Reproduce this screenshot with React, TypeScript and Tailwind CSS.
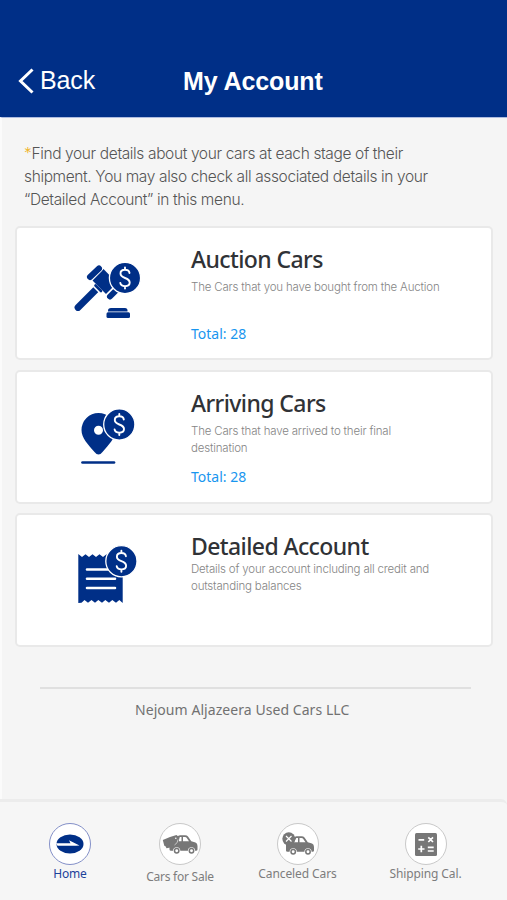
import React from "react";

type CardProps = {
  title: string;
  lines: string[];
  total?: number;
  icon: React.ReactNode;
  compact?: boolean;
};

type TabProps = {
  label: string;
  icon: React.ReactNode;
  className: string;
  active?: boolean;
};

function DollarBadge({ x, y }: { x: number; y: number }) {
  return (
    <g transform={`translate(${x} ${y})`}>
      <circle r="15.6" fill="#002f87" stroke="#fff" strokeWidth="1.3" />
      <path
        d="M4.5 -5C4.2 -7 2.4 -8.2 0 -8.2C-2.6 -8.2 -4.5 -6.7 -4.5 -4.5C-4.5 -2.1 -2.7 -1 0 0C2.7 1 4.7 2.1 4.7 4.6C4.7 6.8 2.7 8.2 0 8.2C-2.6 8.2 -4.4 7 -4.7 4.9M0 -10.5V-8.2M0 8.2V10.5"
        fill="none"
        stroke="#fff"
        strokeWidth="1.9"
        strokeLinecap="round"
      />
    </g>
  );
}

function GavelIcon() {
  return (
    <svg width="100" height="85" viewBox="0 0 100 85" fill="#002f87">
      <path d="M18 63.5L36.5 45" stroke="#002f87" strokeWidth="6.8" strokeLinecap="round" />
      <path d="M34.5 41L41.5 48" stroke="#fff" strokeWidth="5" strokeLinecap="round" />
      <path d="M35.5 41.5L41 47" stroke="#002f87" strokeWidth="2.6" strokeLinecap="round" />
      <path d="M32.5 36.5L43.5 25L57 39L46 50Z" />
      <path d="M29.7 33.5L39 24.5M49.5 52.5L58.5 44" stroke="#fff" strokeWidth="7.6" strokeLinecap="round" />
      <path d="M30 33L39 24.5M50 52.5L58 44.5" stroke="#002f87" strokeWidth="6" strokeLinecap="round" />
      <path d="M48 67.5V66.5Q48 64 51 64H65Q67.5 64 67.5 66.5V67.500Z" />
      <rect x="46.5" y="68.3" width="23.5" height="5.6" rx="1.5" />
      <DollarBadge x={65} y={34} />
    </svg>
  );
}

function PinIcon() {
  return (
    <svg width="100" height="85" viewBox="0 0 100 85" fill="#002f87">
      <path
        fillRule="evenodd"
        d="M38.5 60.5Q36.5 60.5 34.5 58C28 50.5 21.5 44 21.5 36A17 17 0 0 1 55.5 36C55.5 44 49 50.5 42.5 58Q40.5 60.5 38.5 60.5ZM38.5 31.7A4.5 4.5 0 1 0 38.5 40.7A4.5 4.5 0 1 0 38.5 31.7Z"
      />
      <path d="M22.5 68.5H54" stroke="#002f87" strokeWidth="2.7" strokeLinecap="round" />
      <DollarBadge x={59.3} y={30.5} />
    </svg>
  );
}

function ReceiptIcon() {
  return (
    <svg width="100" height="80" viewBox="0 0 100 80" fill="#002f87">
      <path d="M18.3 19L22 22L25.500 19.3L29 22L32.500 19.3L36 22L39.500 19.3L43 22L46.500 19.3L50 22L53.500 19.3L57 22L62.7 19V68L59.3 65L56 67.7L52.3 65L49 67.7L45.3 65L42 67.7L38.3 65L35 67.7L31.5 65L28 67.7L24.5 65L21.5 67.7L18.3 68Z" />
      <path d="M27 34.5H48M27 43.7H55M27 53H55" stroke="#fff" strokeWidth="2.6" strokeLinecap="round" />
      <DollarBadge x={61.4} y={26.2} />
    </svg>
  );
}

function LogoIcon() {
  return (
    <svg width="28" height="20" viewBox="0 0 28 20">
      <ellipse cx="14" cy="10" rx="13.5" ry="9.5" fill="#002f87" />
      <path d="M0 9.3H14.5L13 6.2L23.5 11.4L20 11.8H1.5Z" fill="#fff" />
    </svg>
  );
}

function CarShape() {
  return (
    <>
      <path
        fillRule="evenodd"
        d="M0 8.5Q0 7.3 1.5 7L5 6.5L7.8 1.8Q8.7 .3 10.5 .3H15.5Q17.5 .3 18.5 1.5L21.8 6.2L26 7.5Q28 8.3 28 11V14.5Q28 15.8 26.5 15.8H25.6A3.6 3.6 0 0 0 18.4 15.8H10.8A3.6 3.6 0 0 0 3.6 15.8H1.5Q0 15.8 0 14.5ZM8 6.3H12V2H10.3ZM13.5 6.3H19.5L17.1 2.7Q16.6 2 15.6 2H13.5Z"
      />
      <circle cx="7.2" cy="15.7" r="2.2" fill="none" stroke="#777" strokeWidth="1.5" />
      <circle cx="22" cy="15.7" r="2.2" fill="none" stroke="#777" strokeWidth="1.5" />
    </>
  );
}

function SaleCarIcon() {
  return (
    <svg width="36" height="22" viewBox="0 0 36 22" fill="#777">
      <path d="M.8 7L8 4L14.5 2L17.5 4.5L16.5 10L11 14L4.5 15.3L3.5 13.3L2.3 12.8Z" />
      <g transform="translate(7.5 2)">
        <CarShape />
      </g>
      <circle cx="13.8" cy="5.3" r=".8" fill="#fff" />
      <path d="M16 6.5Q16 10 12.5 12" fill="none" stroke="#fff" strokeWidth=".6" />
    </svg>
  );
}

function CanceledCarIcon() {
  return (
    <svg width="32" height="24" viewBox="0 0 32 24" fill="#777">
      <g transform="translate(4 4)">
        <CarShape />
      </g>
      <circle cx="6.8" cy="6.8" r="6.5" />
      <path d="M4 4L9.5 9.5M9.5 4L4 9.5" stroke="#fff" strokeWidth="1.2" />
    </svg>
  );
}

function CalculatorIcon() {
  return (
    <svg width="22" height="23" viewBox="0 0 22 23">
      <rect width="22" height="23" rx="1.5" fill="#777" />
      <path
        d="M3.5 6.8H9.2M13.3 4.3L18 9M18 4.3L13.3 9M3.2 16H9.5M6.3 12.8V19.2M12.8 14.4H18.7M12.8 18H18.7"
        stroke="#fff"
        strokeWidth="1.7"
      />
    </svg>
  );
}

function AccountCard({ title, lines, total, icon, compact }: CardProps) {
  return (
    <article className="flex h-[134px] rounded-[5px] border-2 border-[#e9e9e9] bg-white">
      <div className="w-[174px] shrink-0 pl-[43px]">{icon}</div>
      <div className="pt-4 whitespace-nowrap">
        <h2 className="font-['Noto_Sans','Open_Sans',sans-serif] text-[23px] leading-[30px] font-medium tracking-[-0.6px] text-[#303236]">
          {title}
        </h2>
        <div className={compact ? "h-[46px]" : "h-[46px] pt-[5px]"}>
          {lines.map((line) => (
            <p
              key={line}
              className="font-[Inter,Roboto,sans-serif] text-[11.5px] leading-[17px] font-light tracking-[-0.18px] text-[#858585]"
            >
              {line}
            </p>
          ))}
        </div>
        {total !== undefined && (
          <p className="pt-[3.5px] font-['Noto_Sans','Open_Sans',sans-serif] text-[14px] leading-5 text-[#1996ef]">
            Total: {total}
          </p>
        )}
      </div>
    </article>
  );
}

function Tab({ label, icon, className, active }: TabProps) {
  return (
    <button className={`flex flex-col items-center ${className}`}>
      <span
        className={`flex size-[42px] items-center justify-center rounded-full border bg-white ${
          active ? "border-[#8490c8]" : "border-[#c9c9c9]"
        }`}
      >
        {icon}
      </span>
      <span
        className={`whitespace-nowrap font-['Noto_Sans','Open_Sans',sans-serif] text-[12px] leading-[18px] ${
          active ? "text-[#1c429a]" : "text-[#7d7d7d]"
        }`}
      >
        {label}
      </span>
    </button>
  );
}

export default function App() {
  return (
    <div className="flex h-[900px] w-[507px] flex-col overflow-hidden bg-[#f5f5f5]">
      {/* Header */}
      <header className="flex h-[117px] shrink-0 items-start bg-[#002f87] pt-[66px] pl-[18px] font-['Liberation_Sans',sans-serif] text-white">
        <button className="flex h-[30px] w-[165px] items-center gap-[6px] text-[25px] tracking-[-0.15px]">
          <svg width="16" height="26" viewBox="0 0 16 26" fill="none" stroke="#fff" strokeWidth="3">
            <path d="M14.5 1.5L2.5 13L14.5 24.5" />
          </svg>
          Back
        </button>
        <h1 className="text-[25px] leading-[30px] font-bold tracking-[-0.1px]">My Account</h1>
      </header>

      <main className="flex h-[682px] shrink-0 flex-col border-t border-t-[#aebce0] border-l-2 border-l-[#fbfbfb] pr-[14px] pl-[13px]">
        <div className="h-[108px] shrink-0 pt-[24px] pl-[9px] font-[Inter,Roboto,sans-serif] text-[15.5px] leading-[23px] font-light tracking-[-0.37px] whitespace-nowrap text-[#555]">
          <p>
            <span className="text-[#efb42b]">*</span>Find your details about your cars at each stage of their
          </p>
          <p>shipment. You may also check all associated details in your</p>
          <p>“Detailed Account” in this menu.</p>
        </div>

        {/* Cards */}
        <section className="flex flex-col gap-[9.5px]">
          <AccountCard
            title="Auction Cars"
            lines={["The Cars that you have bought from the Auction"]}
            total={28}
            icon={<div className="pt-4"><GavelIcon /></div>}
          />
          <AccountCard
            title="Arriving Cars"
            lines={["The Cars that have arrived to their final", "destination"]}
            total={28}
            icon={<div className="pt-[22px]"><PinIcon /></div>}
          />
          <AccountCard
            title="Detailed Account"
            lines={["Details of your account including all credit and", "outstanding balances"]}
            icon={<div className="pt-5"><ReceiptIcon /></div>}
            compact
          />
        </section>

        <div className="mt-[40px] mr-[22px] ml-[25px] border-t-2 border-[#e0e0e0] pt-[10px] pl-[95px] font-['Noto_Sans','Open_Sans',sans-serif] text-[14px] leading-[22px] tracking-[0.06px] whitespace-nowrap text-[#717171]">
          Nejoum Aljazeera Used Cars LLC
        </div>
      </main>

      {/* Bottom tabs */}
      <nav className="flex h-[101px] shrink-0 items-start rounded-tr-[6px] border-t-[3px] border-[#ececec] bg-[#f6f6f6] pt-[21px]">
        <Tab label="Home" icon={<LogoIcon />} active className="ml-[20px] w-[100px] tracking-[-0.2px]" />
        <Tab label="Cars for Sale" icon={<SaleCarIcon />} className="ml-[10px] w-[100px] gap-[3px] tracking-[-0.25px]" />
        <Tab label="Canceled Cars" icon={<CanceledCarIcon />} className="ml-[17.5px] w-[100px] tracking-[-0.1px]" />
        <Tab label="Shipping Cal." icon={<CalculatorIcon />} className="ml-[28px] w-[100px] tracking-[-0.1px]" />
      </nav>
    </div>
  );
}
